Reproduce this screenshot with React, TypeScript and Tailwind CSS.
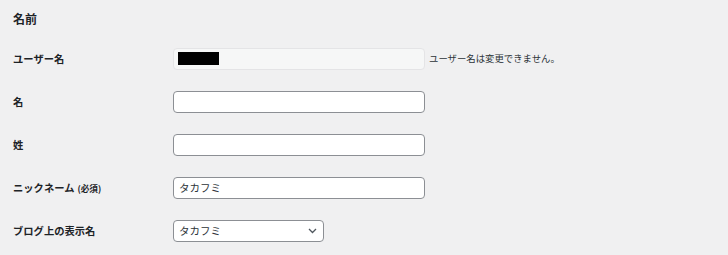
const font = { fontFamily: '"Noto Sans CJK JP", "Noto Sans", sans-serif' };

const rows = [
  { key: "user", label: "ユーザー名" },
  { key: "first", label: "名" },
  { key: "last", label: "姓" },
  { key: "nick", label: "ニックネーム" },
  { key: "display", label: "ブログ上の表示名" },
];

function Field({ k }: { k: string }) {
  if (k === "user") {
    return (
      <div className="flex items-center">
        <div className="flex h-[22px] w-[252px] items-center rounded-[4px] border border-[#e4e4e6] bg-[#f6f7f7] pl-[4px]">
          <div className="h-[13px] w-[41px] bg-black" />
        </div>
        <span className="ml-[4px] text-[9.4px] text-[#2c3338]">ユーザー名は変更できません。</span>
      </div>
    );
  }
  if (k === "display") {
    return (
      <div className="flex h-[22px] w-[151px] items-center justify-between rounded-[4px] border border-[#8c8f94] bg-white pl-[5px] pr-[6px]">
        <span className="text-[10.5px] text-[#2c3338]">タカフミ</span>
        <svg width="9" height="6" viewBox="0 0 9 6" fill="none">
          <path d="M1 1l3.5 3.5L8 1" stroke="#50575e" strokeWidth="1.3" />
        </svg>
      </div>
    );
  }
  return (
    <div className="flex h-[22px] w-[252px] items-center rounded-[4px] border border-[#8c8f94] bg-white pl-[5px]">
      {k === "nick" && <span className="text-[10.5px] text-[#2c3338]">タカフミ</span>}
    </div>
  );
}

export default function App() {
  return (
    <div className="h-[255px] w-[728px] bg-[#f0f0f1] pl-[13px] pt-[10px]" style={font}>
      <h2 className="h-[17px] text-[12px] font-bold leading-[17px] text-[#1d2327]">名前</h2>
      <div className="mt-[10px]">
        {rows.map((r) => (
          <div key={r.key} className="flex h-[43px] items-center">
            <div className="w-[160px] text-[10.3px] font-bold text-[#1d2327]">
              {r.label}
              {r.key === "nick" && <span className="ml-[3px] text-[8.6px]">(必須)</span>}
            </div>
            <Field k={r.key} />
          </div>
        ))}
      </div>
    </div>
  );
}
